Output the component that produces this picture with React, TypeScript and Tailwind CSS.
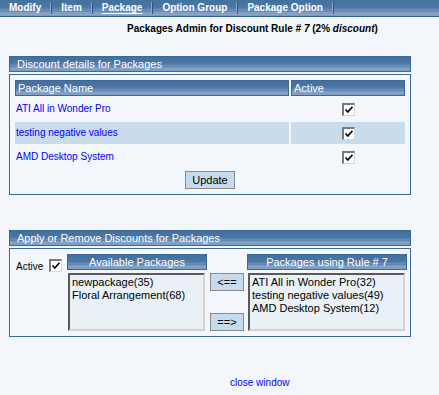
import React from "react";

const barBg =
  "bg-[linear-gradient(to_bottom,#44729f_0%,#4774a3_35%,#4f7aa8_50%,#6f91b9_62%,#5c83ae_70%,#8eaac9_80%,#7394bb_88%,#a7bdd7_94%,#4a76a6_100%)]";

function Check() {
  return (
    <span className="relative inline-block w-[13px] h-[13px] bg-white border-t-2 border-l-2 border-t-[#7b7b7b] border-l-[#7b7b7b] border-b border-r border-b-[#d8d8d8] border-r-[#d8d8d8]">
      <svg viewBox="0 0 10 10" className="absolute left-0 top-0 w-[10px] h-[10px]">
        <path d="M1.5 4.5 L3.8 7 L8.5 1.8" stroke="#000" strokeWidth="1.7" fill="none" />
      </svg>
    </span>
  );
}

function NavSep() {
  return <div className="w-[2px] my-[2px] border-l border-l-[#8fa9c8] border-r border-r-[#2c5480]" />;
}

function NavItem({ label, active }: { label: string; active?: boolean }) {
  return (
    <div className="px-[9px] flex items-center">
      <span className={"text-[10px] font-bold text-white leading-none " + (active ? "underline underline-offset-2" : "")}>
        {label}
      </span>
    </div>
  );
}

function SectionHeader({ title }: { title: string }) {
  return (
    <div className={"h-[16px] border border-[#3a6897] flex items-center pl-[7px] " + barBg}>
      <span className="text-[11px] text-white leading-none">{title}</span>
    </div>
  );
}

function Btn({ label, cls }: { label: string; cls?: string }) {
  return (
    <div
      className={
        "h-[18px] bg-[#c6dcee] border border-[#8a8a8a] flex items-center justify-center text-[11px] text-black leading-none " +
        (cls || "")
      }
    >
      {label}
    </div>
  );
}

function ListBox({ items, w }: { items: string[]; w: string }) {
  return (
    <div
      className={
        "h-[58px] mt-[3px] ml-[1px] bg-[#e9f1f6] border-t-2 border-l-2 border-t-[#5a5a5a] border-l-[#5a5a5a] border-b-2 border-r-2 border-b-[#d6d3cc] border-r-[#d6d3cc] pl-[2px] pt-[1px] " +
        w
      }
    >
      {items.map((t) => (
        <div key={t} className="text-[11px] leading-[13px] text-black whitespace-nowrap">
          {t}
        </div>
      ))}
    </div>
  );
}

export default function App() {
  const rows = [
    { name: "ATI All in Wonder Pro", hl: false },
    { name: "testing negative values", hl: true },
    { name: "AMD Desktop System", hl: false },
  ];
  return (
    <div className="w-[439px] h-[395px] bg-[#f3f7fb] font-['Liberation_Sans',Arial,sans-serif] overflow-hidden">
      {/* nav */}
      <div className={"h-[17px] flex border-b border-b-[#34618f] " + barBg}>
        <NavItem label="Modify" />
        <NavSep />
        <NavItem label="Item" />
        <NavSep />
        <NavItem label="Package" active />
        <NavSep />
        <NavItem label="Option Group" />
        <NavSep />
        <NavItem label="Package Option" />
        <NavSep />
      </div>

      {/* title */}
      <div className="mt-[6px] pl-[127px] text-[10px] leading-[12px] font-bold text-black whitespace-nowrap">
        Packages Admin for Discount Rule <i># 7</i> (2% <i>discount</i>)
      </div>

      <div className="pl-[9px] w-[411px]">
        {/* section 1 */}
        <div className="mt-[21px]">
          <SectionHeader title="Discount details for Packages" />
          <div className="mt-[2px] border border-[#3a6897] px-[5px] pt-[5px] pb-[5px]">
            <div className="grid grid-cols-[274px_114px] gap-[2px]">
              <div className={"h-[16px] border border-[#3a6897] flex items-center pl-[2px] " + barBg}>
                <span className="text-[11px] text-white leading-none">Package Name</span>
              </div>
              <div className={"h-[16px] border border-[#3a6897] flex items-center pl-[2px] " + barBg}>
                <span className="text-[11px] text-white leading-none">Active</span>
              </div>
              {rows.map((r) => (
                <React.Fragment key={r.name}>
                  <div className={"h-[22px] flex items-center pl-[1px] " + (r.hl ? "bg-[#c9dcec]" : "")}>
                    <span className="text-[10px] text-[#0000ff] leading-none">{r.name}</span>
                  </div>
                  <div className={"h-[22px] flex items-center justify-center " + (r.hl ? "bg-[#c9dcec]" : "")}>
                    <Check />
                  </div>
                </React.Fragment>
              ))}
            </div>
            <div className="flex justify-center mt-[3px]">
              <Btn label="Update" cls="w-[50px] text-[11px]" />
            </div>
          </div>
        </div>

        {/* section 2 */}
        <div className="mt-[35px]">
          <SectionHeader title="Apply or Remove Discounts for Packages" />
          <div className="mt-[2px] border border-[#3a6897] pl-[6px] pt-[5px] pb-[5px] flex">
            <div className="w-[51px] flex items-start pt-[5px]">
              <span className="text-[10px] text-black leading-[13px] mr-[6px] mt-[1px]">Active</span>
              <Check />
            </div>
            <div className="w-[140px]">
              <div className={"h-[16px] border border-[#3a6897] flex items-center justify-center " + barBg}>
                <span className="text-[11px] text-white leading-none">Available Packages</span>
              </div>
              <ListBox items={["newpackage(35)", "Floral Arrangement(68)"]} w="w-[137px]" />
            </div>
            <div className="w-[34px] mx-[3px] pt-[19px] flex flex-col justify-between h-[77px]">
              <Btn label="<==" />
              <Btn label="==>" />
            </div>
            <div className="w-[160px]">
              <div className={"h-[16px] border border-[#3a6897] flex items-center justify-center " + barBg}>
                <span className="text-[11px] text-white leading-none">Packages using Rule # 7</span>
              </div>
              <ListBox
                items={["ATI All in Wonder Pro(32)", "testing negative values(49)", "AMD Desktop System(12)"]}
                w="w-[157px]"
              />
            </div>
          </div>
        </div>

        <div className="mt-[40px] pl-[221px] text-[10px] leading-[12px] text-[#0000ff]">close window</div>
      </div>
    </div>
  );
}
